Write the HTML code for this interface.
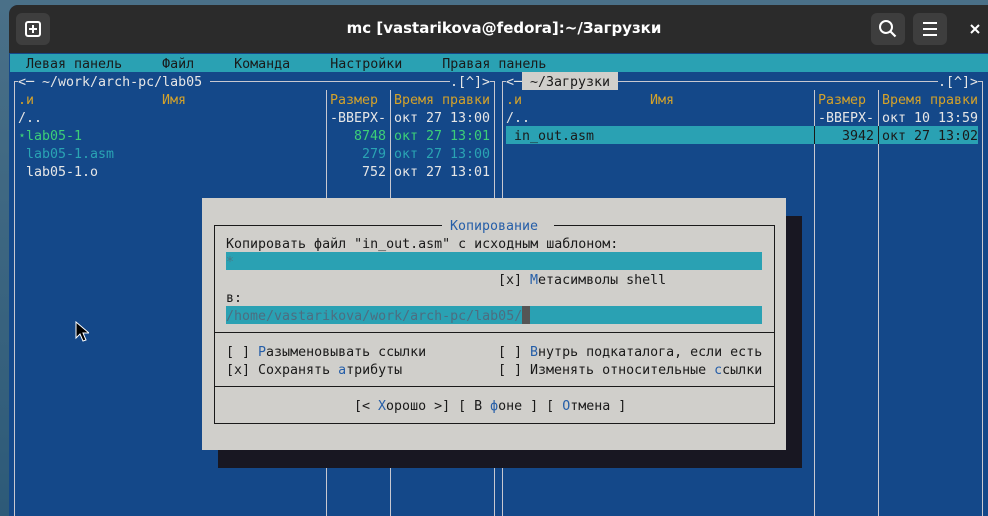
<!DOCTYPE html>
<html><head><meta charset="utf-8"><style>
*{margin:0;padding:0;box-sizing:border-box}
html{overflow:hidden;width:988px;height:516px}
body{width:988px;height:516px;overflow:hidden;background:linear-gradient(180deg,#4a7088,#2d5a78);position:relative;font-family:"DejaVu Sans Mono","Liberation Mono","Noto Sans CJK SC",monospace}
#win{position:absolute;left:9px;top:5px;width:979px;height:511px;background:#144889;border-radius:9px 0 0 0;overflow:hidden}
#tb{position:absolute;left:0;top:0;width:100%;height:48px;background:#2b2b2b}
.btn{position:absolute;top:8px;width:34px;height:32px;background:#3e3e3e;border-radius:6px}
#title{position:absolute;left:0;width:990px;top:14px;text-align:center;color:#fff;font:bold 15px "DejaVu Sans","Liberation Sans",sans-serif}
#t{position:absolute;left:10px;top:54px;width:978px;height:462px;background:#144889;overflow:hidden}
.r{position:absolute;height:18px;line-height:18px;font-size:13.3px;white-space:pre;color:#e6e6e6;margin-top:1.5px}
.vl{position:absolute;width:1px;background:#c8c8d0}
.hl{position:absolute;height:1px;background:#c8c8d0}
.y{color:#d4a22a}.g{color:#3ccf78}.c{color:#2aa4b4}.b{color:#255ea8}.k{color:#1a1a1a}
</style></head><body>
<div id="win">
<div id="tb">
 <div class="btn" style="left:7px"><svg width="34" height="32"><rect x="10" y="9" width="14" height="14" rx="2" fill="none" stroke="#fff" stroke-width="2"/><path d="M17 12v8M13 16h8" stroke="#fff" stroke-width="2"/></svg></div>
 <div id="title">mc [vastarikova@fedora]:~/Загрузки</div>
 <div class="btn" style="left:862px"><svg width="34" height="32"><circle cx="15" cy="14" r="6" fill="none" stroke="#fff" stroke-width="2"/><path d="M19.5 18.5l5 5" stroke="#fff" stroke-width="2.2"/></svg></div>
 <div class="btn" style="left:904px"><svg width="34" height="32"><path d="M10 10h14M10 16h14M10 22h14" stroke="#fff" stroke-width="2"/></svg></div>
 <svg style="position:absolute;left:960px;top:18px" width="12" height="12"><path d="M2 2l8 8M10 2l-8 8" stroke="#fff" stroke-width="2"/></svg>
</div>
</div>
<div id="t">
 <div style="position:absolute;left:0;top:0;width:978px;height:18px;background:#2aa1b3"></div>
 <div class="r k" style="left:0;top:0">  Левая панель     Файл     Команда     Настройки     Правая панель</div>
 <div class="hl" style="left:4px;top:27px;width:480px"></div>
 <div class="vl" style="left:4px;top:27px;height:440px"></div>
 <div class="vl" style="left:484px;top:27px;height:440px"></div>
 <div class="vl" style="left:316px;top:36px;height:430px"></div>
 <div class="vl" style="left:380px;top:36px;height:430px"></div>
 <div class="r" style="left:8px;top:18px;background:#144889">&lt;─ ~/work/arch-pc/lab05 </div>
 <div class="r" style="left:440px;top:18px;background:#144889">.[^]&gt;</div>
 <div class="r y" style="left:8px;top:36px">.и</div>
 <div class="r y" style="left:152px;top:36px">Имя</div>
 <div class="r y" style="left:320px;top:36px">Размер</div>
 <div class="r y" style="left:384px;top:36px">Время правки</div>
 <div class="r" style="left:8px;top:54px">/..</div>
 <div class="r" style="left:320px;top:54px">-ВВЕРХ-</div>
 <div class="r" style="left:384px;top:54px">окт 27 13:00</div>
 <div class="r g" style="left:8px;top:72px">⋆lab05-1</div>
 <div class="r g" style="left:344px;top:72px">8748</div>
 <div class="r g" style="left:384px;top:72px">окт 27 13:01</div>
 <div class="r c" style="left:8px;top:90px"> lab05-1.asm</div>
 <div class="r c" style="left:352px;top:90px">279</div>
 <div class="r c" style="left:384px;top:90px">окт 27 13:00</div>
 <div class="r" style="left:8px;top:108px"> lab05-1.o</div>
 <div class="r" style="left:352px;top:108px">752</div>
 <div class="r" style="left:384px;top:108px">окт 27 13:01</div>
 <div class="hl" style="left:492px;top:27px;width:480px"></div>
 <div class="vl" style="left:492px;top:27px;height:440px"></div>
 <div class="vl" style="left:972px;top:27px;height:440px"></div>
 <div class="vl" style="left:804px;top:36px;height:430px"></div>
 <div class="vl" style="left:868px;top:36px;height:430px"></div>
 <div class="r" style="left:496px;top:18px;background:#144889">&lt;─</div>
 <div style="position:absolute;left:512px;top:18px;width:96px;height:18px;background:#d0cfcb"></div>
 <div class="r k" style="left:512px;top:18px"> ~/Загрузки </div>
 <div class="r" style="left:928px;top:18px;background:#144889">.[^]&gt;</div>
 <div class="r y" style="left:496px;top:36px">.и</div>
 <div class="r y" style="left:640px;top:36px">Имя</div>
 <div class="r y" style="left:808px;top:36px">Размер</div>
 <div class="r y" style="left:872px;top:36px">Время правки</div>
 <div class="r" style="left:496px;top:54px">/..</div>
 <div class="r" style="left:808px;top:54px">-ВВЕРХ-</div>
 <div class="r" style="left:872px;top:54px">окт 10 13:59</div>
 <div style="position:absolute;left:496px;top:72px;width:472px;height:18px;background:#2aa1b3"></div>
 <div class="vl" style="left:804px;top:72px;height:18px;background:#1a1a1a"></div>
 <div class="vl" style="left:868px;top:72px;height:18px;background:#1a1a1a"></div>
 <div class="r k" style="left:496px;top:72px"> in_out.asm</div>
 <div class="r k" style="left:832px;top:72px">3942</div>
 <div class="r k" style="left:872px;top:72px">окт 27 13:02</div>
 <div style="position:absolute;left:208px;top:162px;width:584px;height:252px;background:#181722"></div>
 <div style="position:absolute;left:192px;top:144px;width:584px;height:252px;background:#d0cfcb"></div>
 <div style="position:absolute;left:204px;top:171px;width:561px;height:199px;border:1px solid #1a1a1a"></div>
 <div class="hl" style="left:204px;top:278px;width:561px;background:#1a1a1a"></div>
 <div class="hl" style="left:204px;top:332px;width:561px;background:#1a1a1a"></div>
 <div style="position:absolute;left:432px;top:164px;width:112px;height:14px;background:#d0cfcb"></div>
 <div class="r b" style="left:432px;top:162px"> Копирование </div>
 <div class="r k" style="left:216px;top:180px">Копировать файл "in_out.asm" с исходным шаблоном:</div>
 <div style="position:absolute;left:216px;top:198px;width:536px;height:18px;background:#2aa1b3"></div>
 <div class="r" style="left:216px;top:198px;color:#4a7a88">*</div>
 <div class="r k" style="left:488px;top:216px">[x] <span class="b">М</span>етасимволы shell</div>
 <div class="r k" style="left:216px;top:234px">в:</div>
 <div style="position:absolute;left:216px;top:252px;width:536px;height:18px;background:#2aa1b3"></div>
 <div class="r" style="left:216px;top:252px;color:#4d6d80">/home/vastarikova/work/arch-pc/lab05/</div>
 <div style="position:absolute;left:512px;top:252px;width:8px;height:18px;background:#555"></div>
 <div class="r k" style="left:216px;top:288px">[ ] <span class="b">Р</span>азыменовывать ссылки</div>
 <div class="r k" style="left:488px;top:288px">[ ] <span class="b">В</span>нутрь подкаталога, если есть</div>
 <div class="r k" style="left:216px;top:306px">[x] Сохранять <span class="b">а</span>трибуты</div>
 <div class="r k" style="left:488px;top:306px">[ ] Изменять относительные <span class="b">с</span>сылки</div>
 <div class="r k" style="left:344px;top:342px">[&lt; <span class="b">Х</span>орошо &gt;] [ В <span class="b">ф</span>оне ] [ <span class="b">О</span>тмена ]</div>
 <svg style="position:absolute;left:65px;top:267px" width="14" height="22"><path d="M1 1v16l4-4 3 7 3-1-3-7h6z" fill="#000" stroke="#fff" stroke-width="1"/></svg>
</div>
</body></html>
